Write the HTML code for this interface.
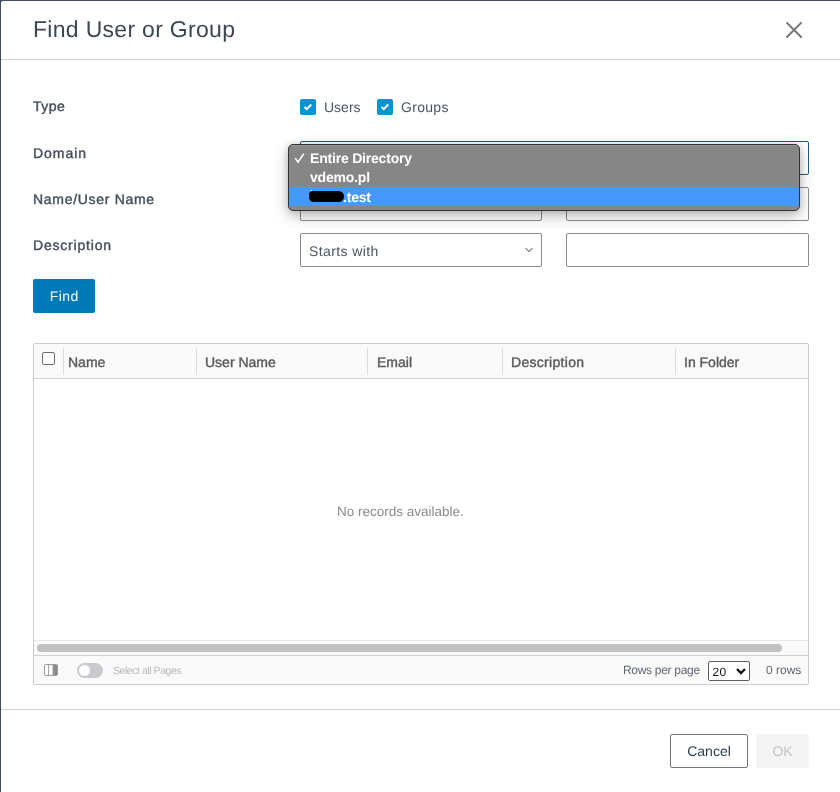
<!DOCTYPE html>
<html><head><meta charset="utf-8">
<style>
*{box-sizing:border-box;margin:0;padding:0}
html,body{width:840px;height:792px;overflow:hidden;background:#434f5e;font-family:"Liberation Sans",sans-serif;color:#313c4a;text-rendering:geometricPrecision}
#wrap{position:absolute;left:0;top:0;width:840px;height:792px;will-change:transform}
.dlg{position:absolute;left:1px;top:1px;width:860px;height:820px;background:#fff;border-radius:2px}
.abs{position:absolute;white-space:nowrap}
.title{left:33px;top:14px;font-size:23px;color:#3d4753;line-height:30px;letter-spacing:0.3px}
.close{left:775px;top:12px;width:40px;height:36px}
.hsep{left:1px;top:59px;width:840px;height:1px;background:#cdd2d6}
.lbl{left:33px;font-size:14px;font-weight:normal;color:#454f5c;line-height:16px;-webkit-text-stroke:0.4px #454f5c}
.cb{width:16px;height:16px;background:#0095d3;border-radius:2px}
.cbt{font-size:14px;color:#485563;line-height:16px}
.sel{border:1px solid #8c8c8c;border-radius:2px;background:#fff}
.btn{background:#0079b8;color:#fff;font-size:14px;border-radius:2px;text-align:center}
.tbl{left:33px;top:343px;width:776px;height:342px;border:1px solid #cccccc;border-radius:2px;background:#fff}
.thead{left:34px;top:344px;width:774px;height:35px;background:#fafafa;border-bottom:1px solid #d2d2d2}
.th{font-size:14px;font-weight:normal;color:#5a5a5a;line-height:16px;top:354px;-webkit-text-stroke:0.4px #5a5a5a}
.vsep{width:1px;background:#dcdcdc;top:348px;height:27px}
.popup{left:288px;top:144px;width:512px;height:67px;background:#868686;border-radius:5px;box-shadow:0 5px 14px rgba(0,0,0,.28),0 0 6px rgba(0,0,0,.12);border:1px solid #333;overflow:hidden}
.popup:after{content:"";position:absolute;left:0;top:0;right:0;height:1px;background:rgba(255,255,255,.15)}
.pi{font-size:14px;font-weight:bold;color:#fff;line-height:19px;position:absolute}
</style></head><body><div id="wrap">
<div class="dlg"></div>
<div class="abs title">Find User or Group</div>
<svg class="abs close" viewBox="0 0 40 36"><path d="M12 10.9L26.1 25M26.1 10.9L12 25" stroke="#767676" stroke-width="2" stroke-linecap="round"/></svg>
<div class="abs hsep"></div>

<div class="abs lbl" style="top:98px;letter-spacing:0.5px">Type</div>
<div class="abs lbl" style="top:145px;letter-spacing:0.95px">Domain</div>
<div class="abs lbl" style="top:191px;letter-spacing:0.7px">Name/User Name</div>
<div class="abs lbl" style="top:237px;letter-spacing:0.8px">Description</div>

<div class="abs cb" style="left:300px;top:99px"><svg width="16" height="16" viewBox="0 0 16 16"><path d="M4.5 7.9L6.8 10.1L11.3 5.5" fill="none" stroke="#fff" stroke-width="2"/></svg></div>
<div class="abs cbt" style="left:324px;top:99px">Users</div>
<div class="abs cb" style="left:377px;top:99px"><svg width="16" height="16" viewBox="0 0 16 16"><path d="M4.5 7.9L6.8 10.1L11.3 5.5" fill="none" stroke="#fff" stroke-width="2"/></svg></div>
<div class="abs cbt" style="left:401px;top:99px;letter-spacing:0.3px">Groups</div>

<div class="abs sel" style="left:300px;top:141px;width:509px;height:34px;border-color:#1a6189"></div>
<div class="abs sel" style="left:300px;top:187px;width:242px;height:34px"></div>
<div class="abs sel" style="left:566px;top:187px;width:243px;height:34px"></div>
<div class="abs sel" style="left:300px;top:233px;width:242px;height:34px"></div>
<div class="abs cbt" style="left:309px;top:243px;letter-spacing:0.4px">Starts with</div>
<svg class="abs" style="left:523px;top:246px" width="12" height="8" viewBox="0 0 12 8"><path d="M2.5 2L6 5.5L9.5 2" fill="none" stroke="#8a94a0" stroke-width="1.4"/></svg>
<div class="abs sel" style="left:566px;top:233px;width:243px;height:34px"></div>

<div class="abs btn" style="left:33px;top:279px;width:62px;height:34px;line-height:34px;letter-spacing:0.5px;text-indent:0.5px">Find</div>

<div class="abs tbl"></div>
<div class="abs thead"></div>
<div class="abs" style="left:42px;top:352px;width:13px;height:13px;border:1px solid #6e6e6e;border-radius:2px;background:#fff"></div>
<div class="abs vsep" style="left:63px"></div>
<div class="abs th" style="left:68px">Name</div>
<div class="abs vsep" style="left:196px"></div>
<div class="abs th" style="left:205px">User Name</div>
<div class="abs vsep" style="left:367px"></div>
<div class="abs th" style="left:377px">Email</div>
<div class="abs vsep" style="left:502px"></div>
<div class="abs th" style="left:511px;letter-spacing:0.3px">Description</div>
<div class="abs vsep" style="left:675px"></div>
<div class="abs th" style="left:684px">In Folder</div>

<div class="abs" style="left:337px;top:504px;font-size:13.5px;color:#8c8c8c;line-height:16px">No records available.</div>

<div class="abs" style="left:34px;top:640px;width:774px;height:15px;background:#fafafa;border-top:1px solid #e8e8e8"></div>
<div class="abs" style="left:37px;top:644px;width:745px;height:8px;background:#c1c1c1;border-radius:4px"></div>
<div class="abs" style="left:34px;top:655px;width:774px;height:29px;background:#fafafa;border-top:1px solid #cfcfcf"></div>

<svg class="abs" style="left:44px;top:664px" width="14" height="12" viewBox="0 0 14 12"><rect x="0.5" y="0.5" width="13" height="11" rx="1.5" fill="#fff" stroke="#999"/><rect x="9" y="1" width="4" height="10" fill="#8c8c8c"/><path d="M4.5 1V11M9 1V11" stroke="#a0a0a0" stroke-width="1"/></svg>
<div class="abs" style="left:77.2px;top:663.2px;width:25.6px;height:14.6px;background:#c9cacd;border-radius:8px"></div>
<div class="abs" style="left:78.5px;top:664.6px;width:11.8px;height:11.8px;background:#fff;border-radius:50%"></div>
<div class="abs" style="left:113px;top:664.5px;font-size:10.5px;color:#b8b8b8;line-height:13px;letter-spacing:-0.45px">Select all Pages</div>

<div class="abs" style="left:623px;top:663px;font-size:12px;color:#5f6670;line-height:14px;letter-spacing:-0.3px">Rows per page</div>
<div class="abs" style="left:708px;top:661px;width:42px;height:20px;border:1px solid #5e5e5e;border-radius:2px;background:#fff"></div>
<div class="abs" style="left:712.5px;top:665px;font-size:12px;color:#111;line-height:15px;letter-spacing:0.3px">20</div>
<svg class="abs" style="left:735px;top:665px" width="12" height="11" viewBox="0 0 12 11"><path d="M2 4L6 8L10 4" fill="none" stroke="#111" stroke-width="2.3"/></svg>
<div class="abs" style="left:766px;top:663px;font-size:12px;color:#5f6670;line-height:14px">0 rows</div>

<div class="abs" style="left:1px;top:709px;width:840px;height:1px;background:#cdd2d6"></div>
<div class="abs" style="left:670px;top:734px;width:78px;height:34px;border:1px solid #757575;border-radius:2px;background:#fff;font-size:14px;color:#313c4a;text-align:center;line-height:32px">Cancel</div>
<div class="abs" style="left:756px;top:734px;width:53px;height:34px;border-radius:2px;background:#f4f4f4;font-size:14px;color:#c3c3c3;text-align:center;line-height:34px">OK</div>

<div class="abs popup">
  <svg style="position:absolute;left:5px;top:8px" width="11" height="11" viewBox="0 0 11 11"><path d="M1.3 5.2L4 9.2L9.8 0.8" fill="none" stroke="#fff" stroke-width="1.5"/></svg>
  <div class="pi" style="left:21px;top:3.5px;letter-spacing:-0.2px">Entire Directory</div>
  <div class="pi" style="left:21px;top:22.5px;letter-spacing:-0.2px">vdemo.pl</div>
  <div style="position:absolute;left:0;top:42px;width:512px;height:19px;background:#4499fb"></div>
  <div class="pi" style="left:54px;top:42.6px;letter-spacing:-0.2px">.test</div>
  <div style="position:absolute;left:21.5px;top:45px;width:1.6px;height:4px;background:#fff"></div>
  <div style="position:absolute;left:20.4px;top:45.8px;width:35px;height:11.2px;background:#000;border-radius:4px 6px 6px 5px"></div>
</div>
</div></body></html>
